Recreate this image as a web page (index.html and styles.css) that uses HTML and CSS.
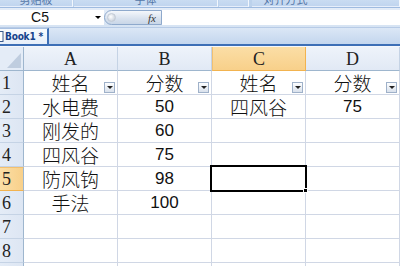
FILE: index.html
```html
<!DOCTYPE html>
<html lang="zh">
<head>
<meta charset="utf-8">
<link rel="stylesheet" href="styles.css">
</head>
<body>
<div class="ribbon">
  <div class="grp g1"><span>剪贴板</span></div>
  <div class="grp g2"><span>字体</span></div>
  <div class="grp g3"><span></span></div>
  <div class="grp g4"><span>对齐方式</span></div>
</div>
<div class="fbar">
  <div class="namebox"><span class="nb-text">C5</span><span class="nb-arrow"></span></div>
  <div class="fxbtn"><span class="knob"></span><span class="fx">fx</span></div>
  <div class="finput"></div>
</div>
<div class="tabbar">
  <div class="tab">
    <svg class="docicon" width="4" height="11" viewBox="0 0 4 11"><rect x="-4" y="0.5" width="7" height="10" fill="#fff" stroke="#3a5a8c"/></svg>
    <span class="tabname">Book1 *</span>
  </div>
</div>
<div class="sheet">
  <div class="corner"></div>
  <div class="ch">A</div>
  <div class="ch">B</div>
  <div class="ch sel">C</div>
  <div class="ch last">D</div>

  <div class="rh">1</div>
  <div class="c zh">姓名<span class="flt"></span></div>
  <div class="c zh">分数<span class="flt"></span></div>
  <div class="c zh">姓名<span class="flt"></span></div>
  <div class="c zh last">分数<span class="flt"></span></div>

  <div class="rh">2</div>
  <div class="c zh">水电费</div>
  <div class="c num">50</div>
  <div class="c zh">四风谷</div>
  <div class="c num last">75</div>

  <div class="rh">3</div>
  <div class="c zh">刚发的</div>
  <div class="c num">60</div>
  <div class="c"></div>
  <div class="c last"></div>

  <div class="rh">4</div>
  <div class="c zh">四风谷</div>
  <div class="c num">75</div>
  <div class="c"></div>
  <div class="c last"></div>

  <div class="rh sel">5</div>
  <div class="c zh">防风钩</div>
  <div class="c num">98</div>
  <div class="c active"><span class="cursor"><span class="handle"></span></span></div>
  <div class="c last"></div>

  <div class="rh">6</div>
  <div class="c zh">手法</div>
  <div class="c num">100</div>
  <div class="c"></div>
  <div class="c last"></div>

  <div class="rh">7</div>
  <div class="c"></div>
  <div class="c"></div>
  <div class="c"></div>
  <div class="c last"></div>

  <div class="rh">8</div>
  <div class="c"></div>
  <div class="c"></div>
  <div class="c"></div>
  <div class="c last"></div>

  <div class="rh"></div>
  <div class="c"></div>
  <div class="c"></div>
  <div class="c"></div>
  <div class="c last"></div>
</div>
</body>
</html>
```

FILE: styles.css
```css
* { box-sizing: border-box; }
html, body { margin: 0; padding: 0; }
body {
  width: 400px;
  height: 266px;
  overflow: hidden;
  background: #fff;
  font-family: "Liberation Sans", "Noto Sans CJK SC", sans-serif;
}

/* ribbon bottom strip */
.ribbon {
  display: flex;
  height: 8px;
  background: #bcd2ec;
  border-bottom: 1px solid #9fbbe0;
  overflow: hidden;
}
.grp {
  height: 7px;
  background: linear-gradient(#c9dcf2, #c0d5ef);
  border-right: 1px solid #f2f7fd;
  border-bottom: 1px solid #e6eefa;
  overflow: hidden;
  display: flex;
  justify-content: center;
  align-items: flex-end;
}
.grp span {
  font-family: "Noto Sans CJK SC", sans-serif;
  font-size: 11px;
  line-height: 11px;
  color: #5477a8;
  margin-bottom: 1px;
}
.g1 { width: 73px; }
.g2 { width: 144px; margin-left: 1px; }
.g3 { width: 30px; margin-left: 1px; }
.g4 { flex: 1; margin-left: 3px; }
.g4 span { margin-right: 80px; }

/* formula bar */
.fbar {
  display: flex;
  height: 19px;
  padding-top: 2px;
  background: linear-gradient(#e4edf8, #d6e3f3);
}
.namebox {
  width: 104px;
  height: 15px;
  background: #fff;
  display: flex;
  align-items: center;
  position: relative;
}
.nb-text {
  width: 80px;
  text-align: center;
  font-size: 14px;
  color: #111;
  line-height: 15px;
}
.nb-arrow {
  position: absolute;
  left: 95px;
  top: 6px;
  width: 0;
  height: 0;
  border-left: 3px solid transparent;
  border-right: 3px solid transparent;
  border-top: 3px solid #000;
}
.fxbtn {
  width: 58px;
  height: 15px;
  border: 1px solid #8ea9cc;
  border-radius: 8px 0 0 8px;
  background: linear-gradient(#f4f7fb, #d7e1ee 60%, #c9d6e7);
  display: flex;
  align-items: center;
  justify-content: space-between;
  padding: 0 5px 0 2px;
}
.knob {
  width: 9px;
  height: 9px;
  border-radius: 50%;
  background: radial-gradient(circle at 40% 40%, #ffffff, #b9c4d2);
  border: 1px solid #c3cbd6;
}
.fx {
  font-family: "Liberation Serif", serif;
  font-style: italic;
  font-size: 11px;
  color: #333;
}
.finput {
  flex: 1;
  height: 15px;
  background: #fff;
}

/* sheet tabs */
.tabbar {
  height: 19px;
  background: linear-gradient(#dbe7f6, #c3d6ee);
  border-top: 1px solid #b7cbe6;
  border-bottom: 2px solid #3d6fb6;
  display: flex;
  align-items: flex-end;
}
.tab {
  width: 49px;
  height: 16px;
  background: linear-gradient(#f7fafd, #e6eef9);
  border-right: 2px solid #3d6fb6;
  border-top: 1px solid #a9c1e2;
  display: flex;
  align-items: center;
  gap: 1px;
  overflow: hidden;
}
.docicon { display: block; flex: none; }
.tabname {
  font-family: "DejaVu Sans Condensed", "Liberation Sans", sans-serif;
  font-weight: bold;
  font-size: 10px;
  line-height: 14px;
  color: #15428b;
  white-space: nowrap;
  letter-spacing: -0.2px;
}

/* grid */
.sheet {
  display: grid;
  grid-template-columns: 24px 94px 94px 94px 94px;
  grid-template-rows: repeat(10, 24px);
  border-top: 1px solid #f4f7fc;
}
.corner {
  background: #e4ecf7;
  border-right: 1px solid #9eb6ce;
  border-bottom: 1px solid #9eb6ce;
  position: relative;
}
.corner::after {
  content: "";
  position: absolute;
  right: 2px;
  bottom: 2px;
  width: 0;
  height: 0;
  border-left: 14px solid transparent;
  border-bottom: 15px solid #bfcddf;
}
.ch {
  background: linear-gradient(#eef3fa, #e1e9f5);
  border-right: 1px solid #c5d3e5;
  border-bottom: 1px solid #9eb6ce;
  font-family: "Liberation Serif", serif;
  font-size: 18px;
  color: #222;
  display: flex;
  align-items: center;
  justify-content: center;
  padding-top: 1px;
}
.ch.sel {
  background: linear-gradient(#fbdea6, #f8d08a);
  border-right-color: #f2b34f;
  border-bottom-color: #f2b34f;
  border-left: 1px solid #f2c070;
}
.rh {
  background: linear-gradient(90deg, #e4ecf7, #dde6f3);
  border-right: 1px solid #9eb6ce;
  border-bottom: 1px solid #c5d3e5;
  font-family: "Liberation Serif", serif;
  font-size: 18px;
  color: #222;
  display: flex;
  align-items: center;
  padding-left: 2px;
  padding-top: 1px;
}
.rh.sel {
  background: linear-gradient(90deg, #fbdea6, #f8d08a);
  border-bottom-color: #f2b34f;
  border-top: 1px solid #f2c070;
}
.c {
  border-right: 1px solid #d0d7e5;
  border-bottom: 1px solid #d0d7e5;
  display: flex;
  align-items: center;
  justify-content: center;
  position: relative;
  color: #111;
}
.zh {
  font-family: "Noto Sans CJK SC", sans-serif;
  font-size: 19px;
  font-weight: 300;
  line-height: 20px;
}
.num {
  font-family: "Liberation Sans", sans-serif;
  font-size: 17px;
  line-height: 20px;
}
.flt {
  position: absolute;
  right: 2px;
  bottom: 1px;
  width: 11px;
  height: 11px;
  border: 1px solid #9fb1c9;
  background: linear-gradient(#fdfeff, #d9e1ec);
}
.flt::after {
  content: "";
  position: absolute;
  left: 2px;
  top: 3px;
  width: 0;
  height: 0;
  border-left: 3px solid transparent;
  border-right: 3px solid transparent;
  border-top: 3px solid #222;
}
.cursor {
  position: absolute;
  left: -2px;
  top: -2px;
  right: -2px;
  bottom: -2px;
  border: 2px solid #000;
  z-index: 2;
}
.handle {
  position: absolute;
  right: -3px;
  bottom: -3px;
  width: 5px;
  height: 5px;
  background: #000;
  border: 1px solid #fff;
}
```
